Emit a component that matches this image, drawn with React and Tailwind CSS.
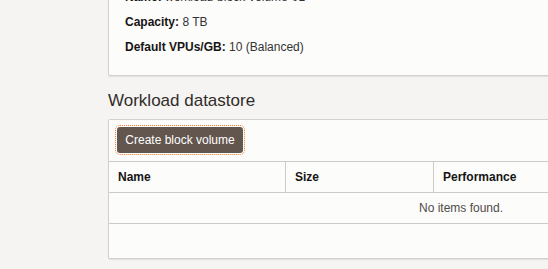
const font = { fontFamily: '"Liberation Sans", Arial, sans-serif' };

const details = [
  { label: 'Name:', value: 'workload-block-volume-01' },
  { label: 'Capacity:', value: '8 TB' },
  { label: 'Default VPUs/GB:', value: '10 (Balanced)' },
];

const columns = [
  { name: 'Name', width: 'w-[177px]' },
  { name: 'Size', width: 'w-[148px]' },
  { name: 'Performance', width: 'flex-1' },
];

export default function App() {
  return (
    <div
      className="w-[548px] h-[269px] overflow-hidden bg-[#f5f4f2] text-[12px] text-[#161513]"
      style={font}
    >
      <div className="pl-[108px] w-[814px]">
        {/* Volume details card, scrolled partly out of view */}
        <div className="-mt-[28px] bg-[#fcfcfb] border border-[#d3d1cf] rounded-[2px] shadow-[0_1px_1px_rgba(0,0,0,0.08)] pl-[16px] pt-[16px] pb-[20px] flex flex-col gap-[9px]">
          {details.map((d) => (
            <div key={d.label} className="leading-[16px]">
              <span className="font-bold">{d.label}</span>{' '}
              <span className="text-[#333]">{d.value}</span>
            </div>
          ))}
        </div>

        <h2 className="mt-[15px] mb-[8px] text-[17px] leading-[20px] text-[#312d2a]">
          Workload datastore
        </h2>

        <div className="bg-[#fcfcfb] border border-[#d3d1cf] rounded-[2px] shadow-[0_1px_1px_rgba(0,0,0,0.08)]">
          {/* Toolbar */}
          <div className="pl-[8px] pt-[7px] pb-[8px] border-b border-[#cdcbc9]">
            <button className="h-[26px] w-[126px] rounded-[3px] bg-[#62564e] text-white text-[12px] leading-[26px] outline outline-1 outline-dotted outline-[#f0772c] outline-offset-[1px]">
              Create block volume
            </button>
          </div>

          {/* Header */}
          <div className="flex h-[31px] border-b border-[#cdcbc9]">
            {columns.map((c, i) => (
              <div
                key={c.name}
                className={`${c.width} flex items-center pl-[9px] font-bold ${i < columns.length - 1 ? 'border-r border-[#cdcbc9]' : ''}`}
              >
                {c.name}
              </div>
            ))}
          </div>

          {/* Empty state */}
          <div className="h-[31px] flex items-center justify-center border-b border-[#cdcbc9] text-[#4f4b47]">
            No items found.
          </div>

          <div className="h-[34px]" />
        </div>
      </div>
    </div>
  );
}
